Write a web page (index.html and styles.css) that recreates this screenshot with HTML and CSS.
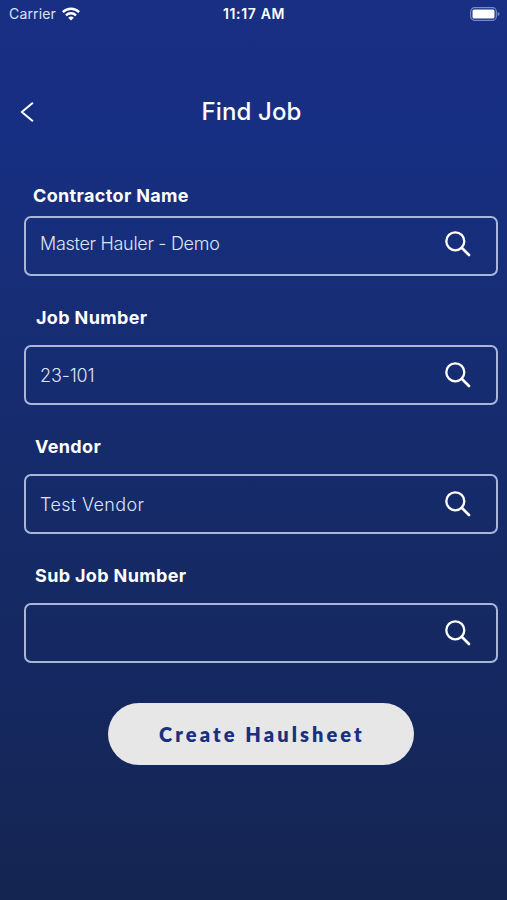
FILE: index.html
```html
<!DOCTYPE html>
<html lang="en">
<head>
<meta charset="utf-8">
<title>Find Job</title>
<link rel="stylesheet" href="styles.css">
</head>
<body>
<svg class="sprite" aria-hidden="true">
  <symbol id="search" viewBox="0 0 28 28">
    <circle cx="11.3" cy="11.3" r="9" fill="none" stroke="currentColor" stroke-width="2.3"/>
    <path d="M17.7 17.7 25 25" fill="none" stroke="currentColor" stroke-width="2.7" stroke-linecap="round"/>
  </symbol>
</svg>
<div class="screen">
  <div class="status">
    <div class="carrier"><span>Carrier</span>
      <svg class="wifi" viewBox="0 0 18 14"><g fill="none" stroke="currentColor" stroke-width="2.4"><path d="M.9 5.1a11.6 11.6 0 0 1 16.2 0"/><path d="M4 8.3a7.1 7.1 0 0 1 10 0"/></g><path d="M9 13.5 6.2 10.8a4 4 0 0 1 5.6 0Z" fill="currentColor"/></svg>
    </div>
    <div class="time">11:17 AM</div>
    <svg class="battery" viewBox="0 0 30 14"><rect x=".7" y=".7" width="25.6" height="12.6" rx="3.8" fill="none" stroke="#7b8cc4" stroke-width="1.2"/><rect x="2.5" y="2.5" width="22" height="9" rx="1.5" fill="#fff"/><path d="M27.6 5v4q2-.7 2-2t-2-2Z" fill="#7b8cc4"/></svg>
  </div>
  <header class="header">
    <svg class="back" viewBox="0 0 14 20"><path d="M12.3 1.3 1.8 10l10.5 8.7" fill="none" stroke="currentColor" stroke-width="2" stroke-linecap="round" stroke-linejoin="round"/></svg>
    <h1 class="title">Find Job</h1>
  </header>
  <main class="form">
    <div class="label contractor">Contractor Name</div>
    <div class="field raised"><span class="value master">Master Hauler - Demo</span><svg class="search"><use href="#search"/></svg></div>
    <div class="label job">Job Number</div>
    <div class="field"><span class="value number">23-101</span><svg class="search"><use href="#search"/></svg></div>
    <div class="label vendor">Vendor</div>
    <div class="field"><span class="value test">Test Vendor</span><svg class="search"><use href="#search"/></svg></div>
    <div class="label subjob">Sub Job Number</div>
    <div class="field"><span class="value"></span><svg class="search"><use href="#search"/></svg></div>
    <button class="create">Create Haulsheet</button>
  </main>
</div>
</body>
</html>
```
FILE: styles.css
```css
* { box-sizing: border-box; }
body { margin: 0; font-family: Inter, "Liberation Sans", sans-serif; color: #fff; }
.sprite { display: none; }
.screen {
  height: 900px;
  display: flex;
  flex-direction: column;
  overflow: hidden;
  background: linear-gradient(#182f84 0, #172f81 150px, #162b6b 450px, #152860 680px, #142551 900px);
}
.status {
  height: 27px;
  display: grid;
  grid-template-columns: 1fr auto 1fr;
  align-items: center;
  padding: 0 7px 0 9px;
  font-size: 14px;
  line-height: 20px;
}
.carrier { display: flex; gap: 6px; align-items: center; color: #dbe2ff; letter-spacing: .15px; }
.wifi { width: 18px; height: 14px; color: #fff; }
.time { font-weight: 600; font-size: 14px; letter-spacing: .65px; margin-left: -1px; }
.battery { width: 30px; height: 14px; justify-self: end; }
.header {
  height: 60px;
  margin-top: 54px;
  padding-left: 20px;
  display: grid;
  grid-template-columns: 14px 1fr 39px;
  align-items: start;
}
.back { width: 14px; height: 20px; margin-top: 21px; }
.title { margin: 16px 0 0; font-size: 24px; line-height: 30px; font-weight: 500; letter-spacing: .15px; text-align: center; padding-left: 1px; }
.form { margin: 40px 9px 0 24px; display: flex; flex-direction: column; }
.label { height: 39px; padding: 0 0 0 11px; font-size: 18px; font-weight: 700; line-height: 24px; letter-spacing: .35px; white-space: nowrap; margin-top: 30px; }
.label.contractor { margin-top: 3px; height: 32px; padding-left: 9px; }
.label.job { padding-left: 12px; }
.field {
  height: 60px;
  border: 2px solid #a9b5db;
  border-radius: 7px;
  display: flex;
  justify-content: space-between;
  align-items: center;
  padding: 0 24px 0 14px;
}
.field.raised { align-items: flex-start; padding-top: 12px; }
.value { font-size: 18px; font-weight: 350; line-height: 28px; color: #dde5fb; }
.master { letter-spacing: -.3px; }
.number { letter-spacing: -.15px; padding-top: 2px; }
.test { letter-spacing: .35px; padding-top: 2px; }
.search { width: 28px; height: 28px; }
.create {
  width: 306px;
  height: 62px;
  margin: 40px 0 0 84px;
  border: 0;
  border-radius: 31px;
  background: #e7e7e7;
  color: #19307f;
  font: 800 20px/62px Lato, sans-serif;
  letter-spacing: 3.1px;
  padding: 0 0 0 2px;
}
```
